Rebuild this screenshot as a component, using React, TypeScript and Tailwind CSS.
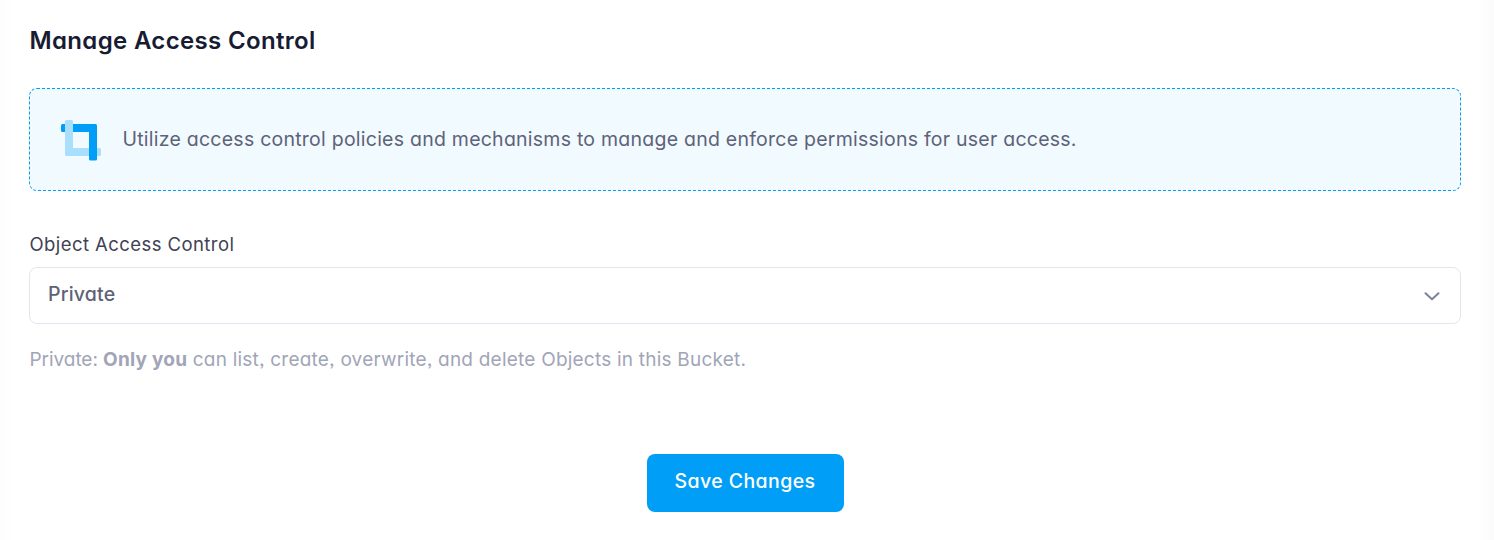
function CropIcon() {
  return (
    <svg width="42" height="42" viewBox="0 0 42 42" className="mt-[2px] shrink-0" aria-hidden="true">
      <path
        fill="#009ef7"
        d="M2.500 4H35.500A1.500 1.500 0 0 1 37 5.500V39A1.500 1.500 0 0 1 35.500 40.500H30.500A1.500 1.500 0 0 1 29 39V12H2.500A1.500 1.500 0 0 1 1 10.500V5.500A1.500 1.500 0 0 1 2.500 4Z"
      />
      <path
        fill="#a9defc"
        d="M6.500 0H11.500A1.500 1.500 0 0 1 13 1.500V28H29V36H6.500A1.500 1.500 0 0 1 5 34.500V1.500A1.500 1.500 0 0 1 6.500 0ZM37 28H39.500A1.500 1.500 0 0 1 41 29.500V34.500A1.500 1.500 0 0 1 39.500 36H37Z"
      />
    </svg>
  );
}

export default function App() {
  return (
    <main className="h-[540px] w-full overflow-hidden bg-white bg-[linear-gradient(to_right,#fcfcfc_0px,#ffffff_12px,#ffffff_1478px,#fafafa_1494px)] pr-[33px] pl-[29px] font-[Inter,'Open_Sans',sans-serif] [font-feature-settings:'cv11','ss03']">
      <h1 className="h-[88px] pt-[25px] pl-[0.5px] text-[24px] leading-[32px] font-semibold tracking-[0.34px] text-[#181c32]">
        Manage Access Control
      </h1>
      <section className="flex h-[103px] items-center rounded-[8px] border border-dashed border-[#009ef7] bg-[#f1faff] pl-[30px]">
        <CropIcon />
        <p className="ml-[20.5px] pb-[2px] text-[19.5px] leading-[28px] tracking-[0.24px] whitespace-nowrap text-[#5e6278]">
          Utilize access control policies and mechanisms to manage and enforce permissions for user access.
        </p>
      </section>
      <div className="mt-[39px]">
        <label className="block h-[37px] pl-[0.5px] text-[18.5px] leading-[28px] tracking-[0.43px] text-[#3f4254]">
          Object Access Control
        </label>
        <button
          type="button"
          className="flex h-[57px] w-full items-center justify-between rounded-[8px] border border-[#e4e6ef] bg-white pr-[20px] pl-[18px] text-[19.5px] leading-[28px] font-medium tracking-[0.2px] text-[#5e6278]"
        >
          <span className="pb-[4px]">Private</span>
          <svg width="16" height="16" viewBox="0 0 16 16" fill="none" aria-hidden="true">
            <path d="M1.500 5.300L8 11.300L14.500 5.300" stroke="#7e8299" strokeWidth="2" strokeLinecap="round" strokeLinejoin="round" />
          </svg>
        </button>
        <p className="mt-[22px] pl-[0.5px] text-[19px] leading-[28px] tracking-[0.22px] whitespace-nowrap text-[#a1a5b7]">
          <span className="tracking-[-0.05px]">Private: </span>
          <b className="font-bold">Only you</b> can list, create, overwrite, and delete Objects in this Bucket.
        </p>
      </div>
      <div className="mt-[80px] flex justify-center">
        <button
          type="button"
          className="h-[58px] w-[197px] rounded-[8px] bg-[#009ef7] pb-[2px] text-[19.5px] font-medium tracking-[0.42px] text-white"
        >
          Save Changes
        </button>
      </div>
    </main>
  );
}
